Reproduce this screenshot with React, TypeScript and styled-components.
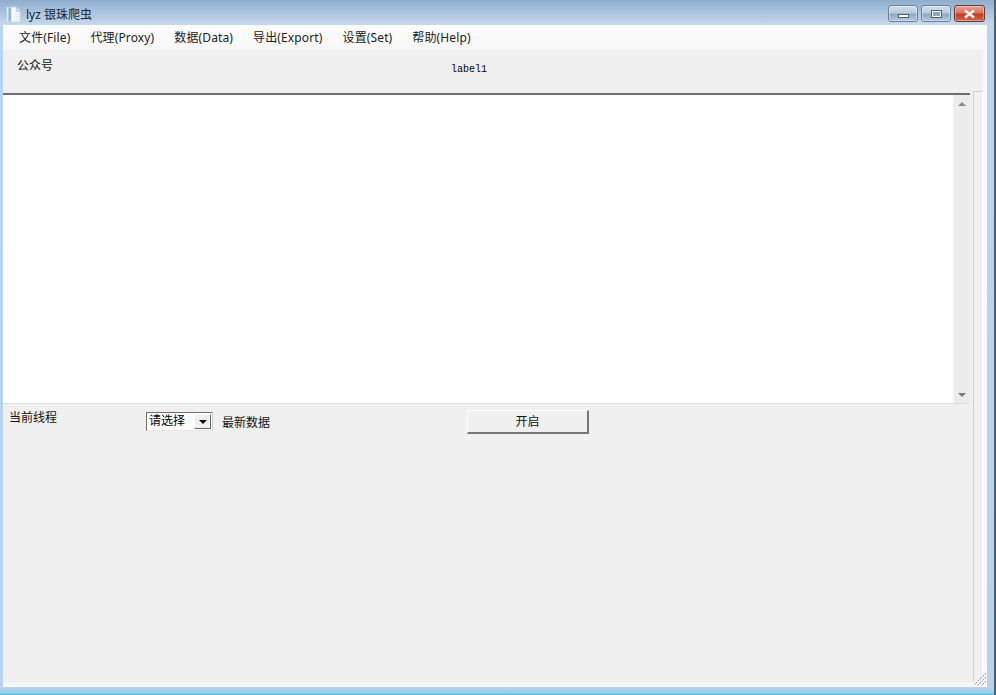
import React from "react"
import styled, { createGlobalStyle } from "styled-components"

const menuItems = ["文件(File)", "代理(Proxy)", "数据(Data)", "导出(Export)", "设置(Set)", "帮助(Help)"]

const App: React.FC = () => {
    return (
        <>
            <GlobalStyle />
            <Frame>
                <TitleBar>
                    <AppIcon viewBox="0 0 16 17">
                        <path d="M1 0.5h10l4 4.5v11.5H1z" fill="#f7fafd" stroke="#c3d4e6" />
                        <path d="M4 1v15" stroke="#8fb6e0" strokeWidth="3" />
                        <path d="M9 8h5M9 11h5M9 14h5" stroke="#dbe4ee" />
                        <path d="M11 1v4h4" fill="#dfe9f3" stroke="#a7bdd4" />
                    </AppIcon>
                    <Title>lyz 银珠爬虫</Title>
                    <WindowButtons>
                        <WinButton>
                            <MinGlyph />
                        </WinButton>
                        <WinButton>
                            <MaxGlyph />
                        </WinButton>
                        <CloseButton>
                            <svg width="13" height="10" viewBox="0 0 13 10">
                                <path
                                    d="M2 1.5l9 7M11 1.5l-9 7"
                                    stroke="#f6f1ee"
                                    strokeWidth="2.6"
                                />
                            </svg>
                        </CloseButton>
                    </WindowButtons>
                </TitleBar>
                <Client>
                    <MenuBar>
                        {menuItems.map((item) => (
                            <MenuItem key={item}>{item}</MenuItem>
                        ))}
                    </MenuBar>
                    <Body>
                        <MainColumn>
                            <TopRow>
                                <AccountLabel>公众号</AccountLabel>
                                <MonoLabel>label1</MonoLabel>
                            </TopRow>
                            <ListArea>
                                <ListBody />
                                <ScrollBar>
                                    <ArrowUp />
                                    <ArrowDown />
                                </ScrollBar>
                            </ListArea>
                            <BottomRow>
                                <ThreadLabel>当前线程</ThreadLabel>
                                <SelectBox>
                                    <SelectText>请选择</SelectText>
                                    <SelectArrow />
                                </SelectBox>
                                <LatestLabel>最新数据</LatestLabel>
                                <StartButton>开启</StartButton>
                            </BottomRow>
                        </MainColumn>
                        <SideStrip />
                    </Body>
                    <Grip width="14" height="14" viewBox="0 0 14 14">
                        <path
                            d="M13 1L1 13M13 5L5 13M13 9L9 13"
                            stroke="#7f7f7f"
                            strokeWidth="1"
                            strokeDasharray="1.5 1"
                        />
                    </Grip>
                </Client>
            </Frame>
        </>
    )
}

export default App

const GlobalStyle = createGlobalStyle`
    html, body {
        margin: 0;
        padding: 0;
        background: #b9d3ea;
    }
    body {
        font-family: "Noto Sans", "Noto Sans CJK SC", sans-serif;
        font-size: 12px;
        color: #111;
    }
`

const Frame = styled.div`
    width: 996px;
    height: 695px;
    box-sizing: border-box;
    display: flex;
    flex-direction: column;
    padding: 0 7px 8px 3px;
    overflow: hidden;
    background: linear-gradient(to bottom, #bcd5ec 0, #b8d2ea 688px, #8fd0ec 693px, #55b5e0 695px);
    border-right: 2px solid #4a6070;
`

const TitleBar = styled.div`
    height: 25px;
    flex: none;
    box-sizing: border-box;
    display: flex;
    align-items: center;
    margin: 0 -7px 0 -3px;
    padding: 3px 6px 0;
    background: linear-gradient(to bottom, #8fadcd 0, #a9c3dd 12px, #c4d9ec 25px);
`

const AppIcon = styled.svg`
    width: 15px;
    height: 17px;
    flex: none;
`

const Title = styled.span`
    margin-left: 5px;
    color: #1a2530;
    font-size: 12px;
    line-height: 17px;
`

const WindowButtons = styled.div`
    margin-left: auto;
    margin-right: 3px;
    display: flex;
    gap: 3px;
    align-self: flex-start;
    margin-top: 2px;
`

const WinButton = styled.div`
    width: 30px;
    height: 17px;
    box-sizing: border-box;
    display: flex;
    align-items: center;
    justify-content: center;
    border: 1px solid #6d8299;
    border-radius: 3px;
    background: linear-gradient(to bottom, #d0dfee 0, #b7cbdf 45%, #8fa8c2 55%, #b3c9dd 100%);
    box-shadow: inset 0 0 0 1px rgba(255, 255, 255, 0.35);
`

const CloseButton = styled(WinButton)`
    width: 31px;
    border-color: #6b3a30;
    background: linear-gradient(to bottom, #e8a394 0, #d67560 45%, #bf3d23 55%, #d26a50 100%);
`

const MinGlyph = styled.div`
    width: 9px;
    height: 2px;
    margin-top: 5px;
    border: 1px solid #4d6074;
    background: #fff;
`

const MaxGlyph = styled.div`
    width: 7px;
    height: 4px;
    border: 1px solid #f4f7fa;
    outline: 1px solid #4d6074;
    background: #8ea5bc;
`

const Client = styled.div`
    position: relative;
    flex: 1;
    min-height: 0;
    display: flex;
    flex-direction: column;
`

const MenuBar = styled.div`
    height: 25px;
    flex: none;
    display: flex;
    align-items: center;
    padding-left: 6px;
    background: linear-gradient(to bottom, #fdfdfd, #f7f7f7);
`

const MenuItem = styled.span`
    padding: 0 10px;
    font-size: 12px;
    line-height: 24px;
    letter-spacing: 0.13px;
    color: #222;
`

const Body = styled.div`
    flex: 1;
    min-height: 0;
    display: flex;
    background: #f0f0f0;
    border-right: 4px solid #f8f8f8;
    border-bottom: 4px solid #f8f8f8;
`

const MainColumn = styled.div`
    width: 967px;
    flex: none;
    display: flex;
    flex-direction: column;
`

const TopRow = styled.div`
    height: 45px;
    flex: none;
    display: flex;
    align-items: flex-start;
    box-sizing: border-box;
    padding-left: 14px;
    border-bottom: 2px solid #6f6f6f;
`

const AccountLabel = styled.span`
    margin-top: 7px;
    font-size: 12px;
    line-height: 17px;
`

const MonoLabel = styled.span`
    margin-top: 14px;
    margin-left: 398px;
    font-family: "Liberation Mono", monospace;
    font-size: 10px;
    line-height: 12px;
    color: #000;
`

const ListArea = styled.div`
    height: 309px;
    flex: none;
    display: flex;
    box-sizing: border-box;
    border-bottom: 1px solid #dedede;
`

const ListBody = styled.div`
    flex: 1;
    background: #fff;
`

const ScrollBar = styled.div`
    width: 16px;
    flex: none;
    display: flex;
    flex-direction: column;
    justify-content: space-between;
    align-items: center;
    padding: 7px 0 6px;
    background: #ececec;
    border-left: 1px solid #f6f6f6;
`

const ArrowUp = styled.div`
    width: 0;
    height: 0;
    border-left: 4px solid transparent;
    border-right: 4px solid transparent;
    border-bottom: 4px solid #8c8c8c;
`

const ArrowDown = styled.div`
    width: 0;
    height: 0;
    border-left: 4px solid transparent;
    border-right: 4px solid transparent;
    border-top: 4px solid #777;
`

const BottomRow = styled.div`
    display: flex;
    align-items: flex-start;
    padding-left: 6px;
`

const ThreadLabel = styled.span`
    width: 137px;
    margin-top: 5px;
    flex: none;
    font-size: 12px;
    line-height: 17px;
`

const SelectBox = styled.div`
    width: 67px;
    height: 19px;
    margin-top: 8px;
    flex: none;
    box-sizing: border-box;
    display: flex;
    align-items: center;
    justify-content: space-between;
    padding-right: 1px;
    background: #fff;
    border-top: 1px solid #6f6f6f;
    border-left: 1px solid #6f6f6f;
    border-right: 1px solid #cfcfcf;
    border-bottom: 1px solid #e6e6e6;
`

const SelectText = styled.span`
    padding: 0 0 2px 2px;
    font-size: 12px;
    line-height: 15px;
    color: #000;
`

const SelectArrow = styled.div`
    width: 17px;
    height: 15px;
    box-sizing: border-box;
    display: flex;
    align-items: center;
    justify-content: center;
    background: #f0f0f0;
    border-top: 1px solid #fff;
    border-left: 1px solid #fff;
    border-right: 1px solid #666;
    border-bottom: 1px solid #666;

    &::after {
        content: "";
        width: 0;
        height: 0;
        border-left: 4px solid transparent;
        border-right: 4px solid transparent;
        border-top: 4px solid #000;
    }
`

const LatestLabel = styled.span`
    width: 245px;
    margin-top: 10px;
    margin-left: 9px;
    flex: none;
    font-size: 12px;
    line-height: 17px;
`

const StartButton = styled.button`
    width: 122px;
    height: 24px;
    margin-top: 6px;
    padding: 0 0 2px;
    flex: none;
    font-family: inherit;
    font-size: 12px;
    color: #111;
    background: #f0f0f0;
    border-top: 1px solid #fff;
    border-left: 1px solid #fff;
    border-right: 2px solid #777;
    border-bottom: 2px solid #777;
`

const SideStrip = styled.div`
    width: 10px;
    margin: 41px 0 1px 3px;
    box-sizing: border-box;
    border: 1px solid #d0d0d0;
    border-right-color: #fff;
    border-bottom-color: #fff;
    border-radius: 1px 1px 0 0;
`

const Grip = styled.svg`
    position: absolute;
    right: 0;
    bottom: 1px;
`
